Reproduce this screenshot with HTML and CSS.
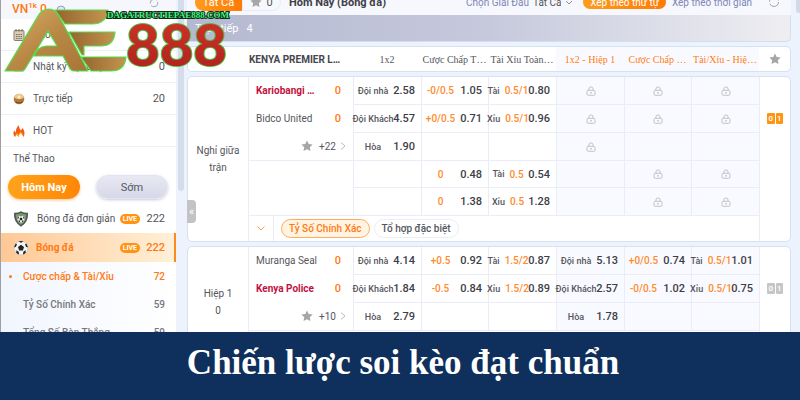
FILE: index.html
```html
<!DOCTYPE html>
<html lang="vi">
<head>
    <meta charset="UTF-8">
    <meta name="viewport" content="width=device-width, initial-scale=1.0">
    <title>Chiến lược soi kèo đạt chuẩn</title>
    <link rel="stylesheet" href="styles.css">
</head>
<body>
    <!-- Shared icons -->
    <svg class="sprite" aria-hidden="true">
        <symbol id="lock" viewBox="0 0 10 10">
            <path d="M2.9 4.4V3a2.1 2.1 0 0 1 4.2 0v1.4" fill="none" stroke="#b4b5bb" stroke-width=".8"/>
            <rect x="1" y="4.3" width="8" height="5" rx="1.2" fill="none" stroke="#b4b5bb" stroke-width=".8"/>
            <path d="M5 6v1.6" stroke="#a5a6ac" stroke-width="1"/>
        </symbol>
        <symbol id="star" viewBox="0 0 12 12">
            <path d="M6 .4l1.7 3.5 3.9.6-2.8 2.7.7 3.9L6 9.3l-3.5 1.8.7-3.9L.4 4.5l3.9-.6z" fill="#a6a6a9"/>
        </symbol>
        <symbol id="chevron" viewBox="0 0 6 10">
            <path d="M1 1.5L5 5 1 8.5" fill="none" stroke="#b9bcc2" stroke-width="1"/>
        </symbol>
        <symbol id="ball" viewBox="0 0 16 16">
            <circle cx="8" cy="8" r="7" fill="#f4f4f4" stroke="#b5b5b5" stroke-width=".5"/>
            <path d="M8 4.8l3 2.2-1.1 3.5H6.1L5 7z M5.5 1.5L8 2.8l2.5-1.3Q8 .5 5.5 1.5z M1 7.5l1.5-3.8L4 4 3 6.8z M15 7.5l-1.5-3.8L12 4l1 2.8z M3.2 12.8l.3-2.6 2.2 1.5.3 2.8Q4.3 14 3.2 12.8z M12.8 12.8l-.3-2.6-2.2 1.5-.3 2.8q1.7-.5 2.8-1.7z" fill="#222"/>
        </symbol>
    </svg>

    <div class="app">
        <!-- Left menu -->
        <nav class="sidebar">
            <div class="account">
                <span class="account-name">Tài khoản chuyển</span>
                <span class="balance">VN<sup>1k</sup> 0</span>
                <svg class="account-info" viewBox="0 0 10 10"><circle cx="5" cy="5" r="4" fill="#dde4f3" stroke="#92a3c6"/></svg>
                <svg class="account-refresh" viewBox="0 0 10 10"><circle cx="5" cy="5" r="3.8" fill="none" stroke="#a7a9b0" stroke-dasharray="9 2"/></svg>
            </div>
            <a class="menu-item" href="#">
                <svg class="menu-icon" viewBox="0 0 12 12"><rect x="1" y="1.5" width="10" height="10" rx="1" fill="#d9cbb3" stroke="#8d806b"/><path d="M3 0v3M6 0v3M9 0v3M3 5.5h6M3 7.5h6M3 9.5h6" stroke="#7d725f" stroke-dasharray="1.5 .8"/></svg>
                <span class="menu-text">Chờ tính</span>
            </a>
            <a class="menu-item" href="#">
                <svg class="menu-icon" viewBox="0 0 12 12"><rect x="1" y="1" width="10" height="10" rx="1" fill="#ead3ae"/></svg>
                <span class="menu-text">Nhật ký đặt cược</span><span>0</span>
            </a>
            <a class="menu-item" href="#">
                <svg class="menu-icon" viewBox="0 0 12 12"><circle cx="6" cy="6" r="5.3" fill="#b27a3c"/><path d="M1 4.5Q6 8 11 4.5 10 1 6 .7 2 1 1 4.5z" fill="#edc893"/><path d="M2.5 9Q6 11 9.5 9" stroke="#704117" fill="none"/><circle cx="6" cy="4" r="1.5" fill="#fff0cf"/></svg>
                <span class="menu-text">Trực tiếp</span><span>20</span>
            </a>
            <a class="menu-item" href="#">
                <svg class="menu-icon" viewBox="0 0 12 12"><path d="M2 12Q-.8 8.5 1.3 5.5 2 7 3 7.5 2.5 3 6 .3 5.8 3 7.8 5.5L9.8 3Q12.8 8 10.5 12 9.5 9 7.3 8 5.5 10 5.3 12 4.5 10.5 3.5 9.8 2.5 11 2 12z" fill="#f35b16"/><path d="M2 12q.5-3 2-4 1 1 1.5 2 1-3 2-3.5Q9.8 8 10.5 12 9 8.5 7.5 8.3 6 9.5 5.3 12q-.8-1.7-1.8-2.2Q2.5 11 2 12z" fill="#ffb21e"/></svg>
                <span class="menu-text">HOT</span>
            </a>
            <h2 class="sports-title">Thể Thao</h2>
            <div class="day-tabs">
                <button class="day-btn active">Hôm Nay</button>
                <button class="day-btn">Sớm</button>
            </div>
            <a class="sport" href="#">
                <svg class="sport-icon" viewBox="0 0 16 16"><path d="M8 .3Q11 2 15 1.8 15.8 11 8 15.8.2 11 1 1.8 5 2 8 .3z" fill="#4c5b4e"/><path d="M8 2q2.5 1.2 5.3 1.2Q13.5 10 8 13.8 2.5 10 2.7 3.2 5.5 3.2 8 2z" fill="#7c9a70"/><use href="#ball" x="4" y="4" width="8" height="8"/></svg>
                <span class="sport-text">Bóng đá đơn giản</span><span class="live">LIVE</span><span class="count">222</span>
            </a>
            <a class="sport selected" href="#">
                <svg class="sport-icon"><use href="#ball"/></svg>
                <span class="sport-text">Bóng đá</span><span class="live">LIVE</span><span class="count">222</span>
            </a>
            <div class="markets">
                <a class="market current" href="#"><span>Cược chấp &amp; Tài/Xỉu</span><span>72</span></a>
                <a class="market" href="#"><span>Tỷ Số Chính Xác</span><span>59</span></a>
                <a class="market" href="#"><span>Tổng Số Bàn Thắng</span><span>59</span></a>
            </div>
        </nav>
        <div class="scroll-track"><div class="scroll-thumb"></div></div>

        <!-- Odds board -->
        <main class="board">
            <button class="collapse" aria-label="Thu gọn">«</button>
            <div class="toolbar">
                <button class="all-btn">Tất Cả</button>
                <button class="fav-btn"><svg class="star"><use href="#star"/></svg>0</button>
                <h1 class="page-title">Hôm Nay (Bóng đá)</h1>
                <label class="league" for="league">Chọn Giải Đấu</label>
                <select id="league" class="league-select"><option>Tất Cả</option></select>
                <svg class="caret" viewBox="0 0 8 5"><path d="M1 1l3 3 3-3" fill="none" stroke="#8d909b"/></svg>
                <div class="sort">
                    <button class="sort-btn active">Xếp theo thứ tự</button>
                    <button class="sort-btn">Xếp theo thời gian</button>
                </div>
                <button class="refresh" aria-label="Làm mới"><svg viewBox="0 0 12 12"><circle cx="6" cy="6" r="4.5" fill="none" stroke="#a2a4aa" stroke-dasharray="12 2"/></svg></button>
            </div>
            <div class="live-bar"><span>Trực tiếp</span><span>4</span></div>

            <table class="card head">
                <colgroup><col class="c-status"><col><col class="c-odds"><col class="c-line"><col class="c-odds"><col class="c-odds"><col class="c-line"><col class="c-odds"><col class="c-end"></colgroup>
                <tr>
                    <th></th>
                    <th class="league-name">KENYA PREMIER L…</th>
                    <th>1x2</th>
                    <th>Cược Chấp T…</th>
                    <th>Tài Xỉu Toàn…</th>
                    <th class="half">1x2 - Hiệp 1</th>
                    <th class="half">Cược Chấp …</th>
                    <th class="half">Tài/Xỉu - Hiệ…</th>
                    <th class="end"><svg class="star"><use href="#star"/></svg></th>
                </tr>
            </table>

            <table class="card match">
                <colgroup><col class="c-status"><col><col class="c-odds"><col class="c-line"><col class="c-odds"><col class="c-odds"><col class="c-line"><col class="c-odds"><col class="c-end"></colgroup>
                <tr>
                    <td class="status" rowspan="6">Nghỉ giữa<br>trận</td>
                    <td class="teams" rowspan="3">
                        <div class="team strong"><span>Kariobangi …</span><b>0</b></div>
                        <div class="team"><span>Bidco United</span><b>0</b></div>
                        <div class="more"><svg class="star"><use href="#star"/></svg>+22<svg class="chevron"><use href="#chevron"/></svg></div>
                    </td>
                    <td><div class="odds"><span>Đội nhà</span><b>2.58</b></div></td>
                    <td><div class="odds"><span><i>-0/0.5</i></span><b>1.05</b></div></td>
                    <td><div class="odds"><span>Tài <i>0.5/1</i></span><b>0.80</b></div></td>
                    <td class="half"><svg class="lock"><use href="#lock"/></svg></td>
                    <td class="half"><svg class="lock"><use href="#lock"/></svg></td>
                    <td class="half"><svg class="lock"><use href="#lock"/></svg></td>
                    <td class="end" rowspan="3"><span class="score"><em>0</em><em>1</em></span></td>
                </tr>
                <tr>
                    <td><div class="odds"><span>Đội Khách</span><b>4.57</b></div></td>
                    <td><div class="odds"><span><i>+0/0.5</i></span><b>0.71</b></div></td>
                    <td><div class="odds"><span>Xỉu <i>0.5/1</i></span><b>0.96</b></div></td>
                    <td class="half"><svg class="lock"><use href="#lock"/></svg></td>
                    <td class="half"><svg class="lock"><use href="#lock"/></svg></td>
                    <td class="half"><svg class="lock"><use href="#lock"/></svg></td>
                </tr>
                <tr>
                    <td><div class="odds"><span>Hòa</span><b>1.90</b></div></td>
                    <td></td>
                    <td></td>
                    <td class="half"><svg class="lock"><use href="#lock"/></svg></td>
                    <td class="half"></td>
                    <td class="half"></td>
                </tr>
                <tr class="short">
                    <td class="teams" rowspan="2"></td>
                    <td></td>
                    <td><div class="odds"><span><i>0</i></span><b>0.48</b></div></td>
                    <td><div class="odds"><span>Tài <i>0.5</i></span><b>0.54</b></div></td>
                    <td class="half"></td>
                    <td class="half"><svg class="lock"><use href="#lock"/></svg></td>
                    <td class="half"><svg class="lock"><use href="#lock"/></svg></td>
                    <td class="end plain" rowspan="3"></td>
                </tr>
                <tr>
                    <td></td>
                    <td><div class="odds"><span><i>0</i></span><b>1.38</b></div></td>
                    <td><div class="odds"><span>Xỉu <i>0.5</i></span><b>1.28</b></div></td>
                    <td class="half"></td>
                    <td class="half"><svg class="lock"><use href="#lock"/></svg></td>
                    <td class="half"><svg class="lock"><use href="#lock"/></svg></td>
                </tr>
                <tr class="last">
                    <td colspan="7">
                        <div class="extra">
                            <button class="expand" aria-label="Mở rộng"><svg viewBox="0 0 8 5"><path d="M.5.5L4 4 7.5.5" fill="none" stroke="#ff9c4a"/></svg></button>
                            <button class="chip on">Tỷ Số Chính Xác</button>
                            <button class="chip">Tổ hợp đặc biệt</button>
                        </div>
                    </td>
                </tr>
            </table>

            <table class="card match">
                <colgroup><col class="c-status"><col><col class="c-odds"><col class="c-line"><col class="c-odds"><col class="c-odds"><col class="c-line"><col class="c-odds"><col class="c-end"></colgroup>
                <tr>
                    <td class="status" rowspan="4">Hiệp 1<br>0</td>
                    <td class="teams" rowspan="3">
                        <div class="team"><span>Muranga Seal</span><b>0</b></div>
                        <div class="team strong"><span>Kenya Police</span><b>0</b></div>
                        <div class="more"><svg class="star"><use href="#star"/></svg>+10<svg class="chevron"><use href="#chevron"/></svg></div>
                    </td>
                    <td><div class="odds"><span>Đội nhà</span><b>4.14</b></div></td>
                    <td><div class="odds"><span><i>+0.5</i></span><b>0.92</b></div></td>
                    <td><div class="odds"><span>Tài <i>1.5/2</i></span><b>0.87</b></div></td>
                    <td class="half"><div class="odds"><span>Đội nhà</span><b>5.13</b></div></td>
                    <td class="half"><div class="odds"><span><i>+0/0.5</i></span><b>0.74</b></div></td>
                    <td class="half"><div class="odds"><span>Tài <i>0.5/1</i></span><b>1.01</b></div></td>
                    <td class="end" rowspan="3"><span class="score off"><em>0</em><em>1</em></span></td>
                </tr>
                <tr>
                    <td><div class="odds"><span>Đội Khách</span><b>1.84</b></div></td>
                    <td><div class="odds"><span><i>-0.5</i></span><b>0.84</b></div></td>
                    <td><div class="odds"><span>Xỉu <i>1.5/2</i></span><b>0.89</b></div></td>
                    <td class="half"><div class="odds"><span>Đội Khách</span><b>2.57</b></div></td>
                    <td class="half"><div class="odds"><span><i>-0/0.5</i></span><b>1.02</b></div></td>
                    <td class="half"><div class="odds"><span>Xỉu <i>0.5/1</i></span><b>0.75</b></div></td>
                </tr>
                <tr>
                    <td><div class="odds"><span>Hòa</span><b>2.79</b></div></td>
                    <td></td>
                    <td></td>
                    <td class="half"><div class="odds"><span>Hòa</span><b>1.78</b></div></td>
                    <td class="half"></td>
                    <td class="half"></td>
                </tr>
                <tr class="last">
                    <td colspan="7"></td>
                    <td class="end plain"></td>
                </tr>
            </table>
        </main>
        <div class="page-edge"><div class="page-thumb"></div></div>
    </div>

    <!-- Brand mark over the board -->
    <svg class="brand" viewBox="0 0 240 80" role="img" aria-label="AE888">
        <defs>
            <linearGradient id="gold" x1="0" y1="0" x2="1" y2="1">
                <stop offset="0" stop-color="#d9ae66"/>
                <stop offset=".5" stop-color="#b98845"/>
                <stop offset="1" stop-color="#a87438"/>
            </linearGradient>
            <linearGradient id="gold-bar" x1="0" x2="1">
                <stop offset="0" stop-color="#96652f"/>
                <stop offset="1" stop-color="#c4944f"/>
            </linearGradient>
            <linearGradient id="red" x1="0" y1="0" x2="0" y2="1">
                <stop offset="0" stop-color="#d5332b"/>
                <stop offset="1" stop-color="#ac211f"/>
            </linearGradient>
        </defs>
        <g stroke="#4fe04a" stroke-width="1.2" stroke-linejoin="round">
            <path d="M55 10h53q0 8-7 12-3 2-8 2H65z" fill="url(#gold-bar)"/>
            <path d="M69 32h46q-1 14-14 14H84v9h-2z" fill="url(#gold-bar)"/>
            <path d="M81 57h45q-1 14-15 14H91z" fill="url(#gold-bar)"/>
            <path d="M5 71L38 16q4-7 11-7 6 0 10 7l29 55H74q-3 0-5-4L63 56H34q3-9 12-10h11L48 31 25 69q-1 2-3 2z" fill="url(#gold)"/>
        </g>
        <text class="brand-number" x="126" y="66">888</text>
        <text class="brand-site" x="168" y="18">DAGATRUCTIEPAE888.COM</text>
    </svg>

    <footer class="banner">Chiến lược soi kèo đạt chuẩn</footer>
</body>
</html>
```

FILE: styles.css
```css
* {
    box-sizing: border-box;
}
body {
    margin: 0;
    height: 100vh;
    display: flex;
    flex-direction: column;
    overflow: hidden;
    font-family: Roboto, "Liberation Sans", sans-serif;
    font-size: 11px;
    color: #55565c;
    background: #edf3fd;
}
a {
    color: inherit;
    text-decoration: none;
}
button, select {
    font: inherit;
    color: inherit;
    border: none;
    background: none;
    padding: 0;
    margin: 0;
    white-space: nowrap;
}
svg {
    display: block;
    flex: none;
}
.sprite {
    position: absolute;
    width: 0;
    height: 0;
}
.app {
    flex: 1;
    min-height: 0;
    display: flex;
    overflow: hidden;
}

/* Left menu */
.sidebar {
    flex: none;
    width: 176px;
    border-left: 1px solid #a0a0a3;
    background: #fff;
}
.account {
    display: grid;
    grid-template-columns: auto 10px 1fr;
    align-items: center;
    column-gap: 9px;
    height: 31px;
    margin-top: -12px;
    padding: 0 17px 2px 11px;
    background: #f5f7fd;
}
.account-name {
    grid-column: 1 / 4;
    grid-row: 1;
    line-height: 14px;
}
.account-refresh {
    grid-column: 3;
    grid-row: 1 / 3;
    justify-self: end;
    width: 10px;
    height: 10px;
}
.account-info {
    grid-row: 2;
    width: 10px;
    height: 10px;
}
.balance {
    grid-row: 2;
    font-size: 12px;
    font-weight: 500;
    line-height: 15px;
    color: #ff7a10;
}
.balance sup {
    font-size: 8px;
    line-height: 1px;
}
.menu-item {
    display: flex;
    align-items: center;
    gap: 8px;
    height: 32px;
    padding: 0 11px 0 12px;
    border-bottom: 1px solid #eff0f5;
}
.menu-icon {
    width: 12px;
    height: 12px;
}
.menu-text {
    flex: 1;
    font-size: 10px;
}
.sports-title {
    margin: 0;
    padding: 4px 12px;
    font-size: 10px;
    font-weight: 400;
    line-height: 16px;
}
.day-tabs {
    display: flex;
    justify-content: space-between;
    padding: 4px 8px 5px 7px;
}
.day-btn {
    width: 72px;
    height: 24px;
    border-radius: 12px;
    background: linear-gradient(#e9e9f4, #d7d8e8);
    border: 1px solid #e2e3f0;
    box-shadow: 0 1px 3px #c9cbdc;
}
.day-btn.active {
    border: none;
    font-weight: 700;
    color: #fff;
    background: linear-gradient(100deg, #ffa41b, #ff8505);
    box-shadow: 0 1px 3px #ffc48b;
}
.sport {
    display: flex;
    align-items: center;
    height: 29px;
    padding: 0 11px 0 12px;
}
.sport-icon {
    width: 16px;
    height: 16px;
    margin-right: 8px;
}
.sport-text {
    flex: 1;
    font-size: 10px;
    white-space: nowrap;
}
.sport.selected {
    font-weight: 500;
    color: #ff7a14;
    background: linear-gradient(90deg, #ffc894, #fff0d8);
    border-right: 2px solid #ff8a1c;
    padding-right: 9px;
}
.selected .sport-text {
    font-weight: 700;
}
.sport.selected .sport-icon {
    margin-right: 7px;
}
.live {
    padding: 0 3px;
    border-radius: 6px;
    font-size: 7px;
    font-weight: 700;
    line-height: 10px;
    color: #fff;
    background: #ff9412;
}
.count {
    width: 25px;
    text-align: right;
}
.markets {
    background: linear-gradient(90deg, #f1f5fe, #fff);
}
.market {
    display: flex;
    justify-content: space-between;
    align-items: center;
    height: 28px;
    padding: 0 11px 0 22px;
    font-size: 10px;
    font-weight: 500;
    color: #76777d;
}
.market.current {
    position: relative;
    color: #ff7a14;
}
.market.current::before {
    content: "";
    position: absolute;
    left: 8px;
    width: 3px;
    height: 3px;
    border-radius: 50%;
    background: #ff7a14;
}
.scroll-track {
    flex: none;
    width: 11px;
    padding-left: 2px;
    background: #edf2fc;
}
.scroll-thumb {
    width: 6px;
    height: 191px;
    border-radius: 0 0 3px 3px;
    background: #d5dcea;
}

/* Odds board */
.board {
    position: relative;
    flex: 1;
    min-width: 0;
}
.toolbar {
    display: flex;
    align-items: center;
    height: 26px;
    margin-top: -11px;
    padding: 0 8px;
    background: #f6f8fd;
}
.all-btn {
    width: 47px;
    height: 17px;
    border-radius: 9px 0 0 9px;
    color: #fff;
    background: linear-gradient(90deg, #ff9c1c, #ff7b06);
}
.fav-btn {
    display: flex;
    align-items: center;
    justify-content: center;
    gap: 4px;
    width: 39px;
    height: 17px;
    border: 1px solid #e9ebf3;
    border-radius: 0 9px 9px 0;
}
.page-title {
    flex: 1;
    margin: 0 0 0 8px;
    font-size: 11px;
    font-weight: 700;
    color: #3f4049;
    white-space: nowrap;
}
.league {
    margin-right: 4px;
    font-size: 10px;
    color: #7f86b5;
}
.league-select {
    width: 28px;
    appearance: none;
    font-size: 10px;
}
.caret {
    width: 8px;
    height: 5px;
    margin: 0 10px 0 4px;
}
.sort {
    display: flex;
    height: 14px;
}
.sort-btn {
    width: 92px;
    font-size: 10px;
    border-radius: 8px;
    color: #7f86b5;
}
.sort-btn.active {
    width: 83px;
    color: #fff;
    background: linear-gradient(90deg, #ff9c1c, #ff7b06);
}
.refresh svg {
    width: 12px;
    height: 12px;
}
.refresh {
    margin: 0 3px 0 10px;
}
.live-bar {
    display: flex;
    align-items: center;
    gap: 8px;
    height: 27px;
    padding: 0 8px;
    border: 1px solid #d3deee;
    border-width: 0 1px 1px 0;
    border-radius: 0 0 5px 0;
    color: #fff;
    background: linear-gradient(90deg, #b4b9d1, #c6c9dc 50%, #eeeef2);
}
.card {
    width: 100%;
    table-layout: fixed;
    border-collapse: separate;
    border-spacing: 0;
    margin-top: 4px;
    border: 1px solid #d6e1f1;
    border-radius: 5px;
    background: #fff;
}
.c-status {
    width: 60px;
}
.c-odds {
    width: 68px;
}
.c-line {
    width: 67px;
}
.c-end {
    width: 31px;
}
th, td {
    padding: 0;
}
.head th {
    height: 24px;
    font-family: "Liberation Serif", serif;
    font-size: 10px;
    font-weight: 400;
    white-space: nowrap;
}
.head .league-name {
    padding-left: 1px;
    font-family: Roboto, "Liberation Sans", sans-serif;
    font-weight: 700;
    text-align: left;
    color: #45464e;
}
.head .half {
    color: #ff7a14;
}
.half {
    background: #f9faff;
}
.star {
    width: 12px;
    height: 12px;
}
.end .star, .end .score, .lock {
    margin: 0 auto;
}
.match td {
    height: 28px;
    border-left: 1px solid #eaecf7;
    border-top: 1px solid #eaecf7;
}
.match tr:first-child td {
    height: 27px;
    border-top: none;
}
.match .short td {
    height: 27px;
}
.match .last td {
    height: 26px;
}
.match .plain {
    border-top: none;
}
.match .status {
    border: none;
    font-size: 10px;
    text-align: center;
    line-height: 17px;
}
.team, .more {
    display: flex;
    align-items: center;
    height: 28px;
    padding: 0 12px 0 7px;
    font-size: 10px;
}
.team {
    justify-content: space-between;
}
.team:first-child {
    height: 27px;
}
.team.strong {
    font-weight: 700;
    color: #c2113f;
}
.team b {
    font-size: 11px;
    font-weight: 500;
    color: #ff7a14;
}
.more {
    justify-content: flex-end;
    gap: 4px;
    padding-right: 7px;
}
.more .star {
    margin-right: 2px;
}
.chevron {
    width: 6px;
    height: 10px;
}
.odds {
    display: flex;
    align-items: center;
    padding-right: 6px;
}
.odds span {
    display: flex;
    align-items: center;
    flex: 1;
    min-width: 0;
    justify-content: center;
    gap: 5px;
    font-size: 9px;
    font-weight: 500;
    white-space: nowrap;
}
.odds i {
    font-size: 10px;
    font-style: normal;
    color: #ff8a2b;
}
.odds b {
    flex: none;
    width: 23px;
    text-align: right;
    font-weight: 500;
    color: #3d3e48;
}
.lock {
    width: 10px;
    height: 10px;
}
.score {
    display: flex;
    gap: 1px;
    width: 16px;
}
.score em {
    flex: 1;
    border-radius: 1px;
    font-size: 8px;
    font-style: normal;
    font-weight: 500;
    line-height: 11px;
    text-align: center;
    color: #fff;
    background: #ff9412;
}
.score.off em {
    background: #c6c6c8;
}
.extra {
    display: flex;
    align-items: center;
    gap: 4px;
    height: 25px;
}
.expand {
    width: 25px;
    height: 25px;
    margin-right: 3px;
    border-right: 1px solid #eaecf7;
}
.expand svg {
    width: 8px;
    height: 5px;
    margin: 0 auto;
}
.chip {
    height: 19px;
    padding: 0 7px;
    border: 1px solid #eceef6;
    border-radius: 10px;
    font-size: 10px;
    font-weight: 500;
}
.chip.on {
    color: #ff7a14;
    border-color: #ffac63;
    background: #fff3e2;
}
.collapse {
    position: absolute;
    top: 200px;
    left: 0;
    width: 9px;
    height: 23px;
    border-radius: 0 4px 4px 0;
    color: #fff;
    background: #c3c3c5;
}
.page-edge {
    flex: none;
    width: 9px;
    padding-left: 5px;
}
.page-thumb {
    height: 13px;
    border-radius: 0 0 0 3px;
    background: #d5d9e5;
}

/* Brand mark */
.brand {
    position: absolute;
    top: 0;
    left: 0;
    width: 240px;
    height: 80px;
    pointer-events: none;
}
.brand-number {
    font-family: Lato, sans-serif;
    font-size: 58px;
    font-weight: 900;
    fill: url(#red);
    stroke: #4fc03c;
    stroke-width: 2px;
    paint-order: stroke;
}
.brand-site {
    font-family: "Liberation Serif", serif;
    font-size: 9px;
    font-weight: 700;
    text-anchor: middle;
    fill: #45f583;
    stroke: #0b2d12;
    stroke-width: 2px;
    paint-order: stroke;
}

.banner {
    flex: none;
    height: 68px;
    padding: 0 0 6px 6px;
    display: flex;
    align-items: center;
    justify-content: center;
    font-family: "Liberation Serif", serif;
    font-size: 35px;
    font-weight: 700;
    color: #fff;
    background: #0f2f5c;
}
```
